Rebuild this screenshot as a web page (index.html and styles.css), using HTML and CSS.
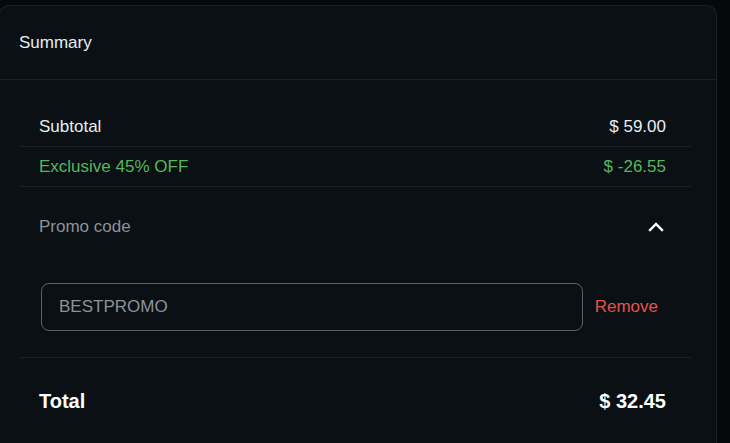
FILE: index.html
```html
<!DOCTYPE html>
<html lang="en">
<head>
  <meta charset="UTF-8">
  <meta name="viewport" content="width=device-width, initial-scale=1.0">
  <title>Summary</title>
  <link rel="stylesheet" href="styles.css">
</head>
<body>

<section class="summary">
  <header class="summary-head">Summary</header>

  <div class="summary-body">
    <div class="row">
      <span>Subtotal</span>
      <span>$ 59.00</span>
    </div>
    <div class="row discount">
      <span>Exclusive 45% OFF</span>
      <span>$ -26.55</span>
    </div>

    <div class="promo">
      <div class="promo-head">
        <span>Promo code</span>
        <svg class="chevron" width="16" height="10" viewBox="0 0 16 10">
          <path d="M2 8 L8 2 L14 8" fill="none" stroke="#ffffff" stroke-width="2.4" stroke-linecap="square"/>
        </svg>
      </div>
      <div class="promo-form">
        <input type="text" id="promo" value="BESTPROMO">
        <button type="button" class="remove">Remove</button>
      </div>
    </div>

    <div class="row total">
      <span>Total</span>
      <span>$ 32.45</span>
    </div>
  </div>
</section>

</body>
</html>
```

FILE: styles.css
```css
body {
  background-color: #05090c;
  margin: 0;
  font-family: "Liberation Sans", Arial, sans-serif;
  color: #e6edf3;
  height: 100vh;
  overflow: hidden;
}

.summary {
  margin: 5px 13px 0 -1px;
  background-color: #0a1014;
  border: 1px solid #1a2026;
  border-bottom: none;
  border-radius: 10px 10px 0 0;
  height: 438px;
  box-sizing: border-box;
}

.summary-head {
  height: 73px;
  display: flex;
  align-items: center;
  padding-left: 19px;
  font-size: 17px;
  border-bottom: 1px solid #1a2026;
}

.summary-body {
  padding: 27px 25px 0 19px;
}

.row {
  display: flex;
  justify-content: space-between;
  align-items: center;
  height: 39px;
  padding: 0 25px 0 20px;
  font-size: 17px;
  border-bottom: 1px solid #1a2026;
}

.discount {
  color: #56b85b;
}

.promo {
  border-bottom: 1px solid #1a2026;
}

.promo-head {
  display: flex;
  justify-content: space-between;
  align-items: center;
  height: 79px;
  padding: 0 27px 0 20px;
  font-size: 17px;
  color: #8b939b;
}

.chevron {
  display: block;
}

.promo-form {
  display: flex;
  align-items: center;
  gap: 12px;
  padding: 17px 33px 26px 22px;
}

.promo-form input {
  flex: 1;
  height: 48px;
  box-sizing: border-box;
  padding: 0 17px;
  border: 1px solid #5a6167;
  border-radius: 8px;
  background-color: transparent;
  color: #8b939b;
  font-family: inherit;
  font-size: 17px;
  outline: none;
}

.remove {
  background: none;
  border: none;
  padding: 0;
  color: #e5534b;
  font-family: inherit;
  font-size: 17px;
  cursor: pointer;
}

.total {
  height: 86px;
  border-bottom: none;
  font-weight: bold;
  font-size: 20px;
  color: #ffffff;
}
```
